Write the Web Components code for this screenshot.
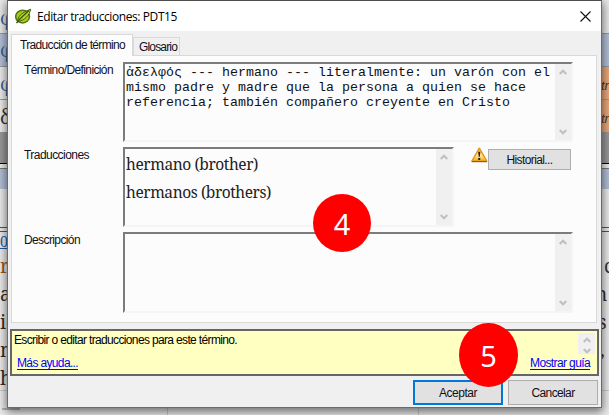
<!DOCTYPE html>
<html lang="es">
<head>
<meta charset="utf-8">
<title>Editar traducciones</title>
<style>
html,body{margin:0;width:609px;height:415px;overflow:hidden;background:#ececec}
body{font:12px "Liberation Sans",sans-serif;color:#101020}
</style>
</head>
<body>
<term-app></term-app>
<script>
const define = (name, html, setup) => {
  const t = document.createElement('template');
  t.innerHTML = html;
  customElements.define(name, class extends HTMLElement {
    constructor() { super(); this.attachShadow({mode:'open'}).append(t.content.cloneNode(true)); }
    connectedCallback() { if (setup) setup(this, this.shadowRoot); }
  });
};

/* A single line of text spread to a given width. */
define('fit-text', `<style>:host{display:block;white-space:pre}span{display:inline-block}</style><span><slot></slot></span>`,
  (el, root) => {
    const s = root.querySelector('span'), n = [...el.textContent].length;
    s.style.letterSpacing = ((+el.getAttribute('w') - s.getBoundingClientRect().width) / n) + 'px';
  });

define('scroll-strip', `<style>
:host{display:flex;flex-direction:column;justify-content:space-between;align-items:center;flex:none;width:16px;background:#f0f0f0;padding:5px 0;box-sizing:border-box}
svg{display:block;width:8px;height:6px;fill:none;stroke:#bfbfbf;stroke-width:2}
</style><svg viewBox="0 0 8 6"><path d="M.7 5 4 1.7 7.3 5"/></svg><svg viewBox="0 0 8 6"><path d="M.7 1 4 4.3 7.3 1"/></svg>`);

define('text-box', `<style>
:host{display:flex;box-sizing:border-box;height:80px;border:2px solid;border-color:#7c7c7c #f5f5f5 #f5f5f5 #7c7c7c;background:#fcfcfc}
div{flex:1;min-width:0;overflow:visible}
</style><div><slot></slot></div><scroll-strip></scroll-strip>`);

define('push-button', `<style>
:host{display:flex;box-sizing:border-box;width:90px;height:25px;background:#e1e1e1;border:1px solid #adadad;align-items:center;justify-content:center}
:host([primary]){border:2px solid #0078d7}
:host([small]){width:83px;height:21px}
</style><slot></slot>`);

define('step-badge', `<style>
:host{position:absolute;display:flex;align-items:center;justify-content:center;width:58px;height:58px;border-radius:50%;background:#f00;color:#fff;font:29px/1 "Noto Sans","Open Sans",sans-serif}
</style><slot></slot>`);

define('leaf-icon', `<style>:host{display:block;width:17px;height:17px}svg{display:block}</style>
<svg width="17" height="17" viewBox="0 0 17 17"><ellipse cx="7.6" cy="8.6" rx="6.9" ry="6.3" fill="#a9cc22" stroke="#53750f" stroke-width="1.5"/><path d="M2.5 14C3 8 6 5 15.7 1.2 14.4 7.500 10 12 2.500 14Z" fill="#b9d52b" stroke="#40600d" stroke-width="1"/><path d="M1.500 15C4.500 11 8 8 14 2.500" fill="none" stroke="#34500b" stroke-width="1.3"/></svg>`);

define('warning-icon', `<style>:host{display:block;width:17px;height:16px}svg{display:block}</style>
<svg width="17" height="16" viewBox="0 0 17 16"><defs><linearGradient id="g" x2="0" y2="1"><stop offset="0" stop-color="#f1b24a"/><stop offset=".55" stop-color="#ffe79a"/><stop offset="1" stop-color="#ffa30a"/></linearGradient></defs><path d="M8.300 1.200 15.800 14.200H.9Z" fill="url(#g)" stroke="#e49a22" stroke-width="1.500" stroke-linejoin="round"/><path d="M.8 14.700H16" stroke="#8a4c08" stroke-width="1"/><path d="M7.200 4.800h2.100l-.5 5h-1.100zM7.300 11h1.900v2H7.300z" fill="#1c1c1c"/></svg>`);

/* One band of the window behind the dialog. */
define('back-row', `<style>
:host{display:flex;justify-content:space-between;box-sizing:border-box;overflow:hidden;font:19px/28px "Noto Serif","Liberation Serif",serif;color:#332f2c}
div{width:8px;overflow:hidden;position:relative;display:flex;white-space:pre}
div:first-child{justify-content:flex-end}
</style><div><slot name="l"></slot></div><div><slot name="r"></slot></div>`);

define('backdrop-page', `<style>
:host{display:block;width:609px;height:415px;background:#ececec;overflow:hidden}
.t{background:#e9e9e9;border-bottom:1px solid #999;height:33px}
.b{background:#b3c0d8}
.g{color:#38618c}
.i{font:italic 13px/37px "Liberation Sans",sans-serif;color:#493626}
.u{color:#175ca9;text-decoration:underline}
.grid{display:grid;grid-template-columns:168px 251px 1fr;height:24px;border-top:1px solid #c9c9c9}
.grid div{border-right:1px solid #c9c9c9;padding:17px 0 0 2px}
.grid i{display:block;width:18px;height:2px;background:#b5b5b5}
.half{background:linear-gradient(90deg,#ececec 50%,#eaa879 50%)}
</style>
<back-row class="t" style="height:34px"><span slot="l" class="g" style="line-height:36px">φ</span></back-row>
<back-row class="t b"><span slot="l" class="g" style="line-height:32px">φ</span></back-row>
<back-row class="t half"><span slot="l" class="g" style="line-height:34px">φ</span><span slot="r" class="i">tra</span></back-row>
<back-row class="half" style="height:32px"><span slot="l" style="line-height:34px">δ</span><span slot="r" class="i">tra</span></back-row>
<back-row style="height:32px;background:#999;border-bottom:1px solid #000"></back-row>
<back-row style="height:5px;border-bottom:1px solid #777"></back-row>
<back-row class="b" style="height:20px"></back-row>
<back-row style="height:39px;border-bottom:1px solid #555"></back-row>
<back-row style="height:4px;border-bottom:1px solid #555"></back-row>
<back-row style="height:20px;"><span slot="l" class="u" style="font:16px/20px 'Liberation Serif',serif">0 </span></back-row>
<back-row style="height:28px"><span slot="l" style="color:#9b5725">r</span><span slot="r" style="margin-left:3px">c</span></back-row>
<back-row style="height:28px"><span slot="l">a </span><span slot="r" style="margin-left:-6px">n</span></back-row>
<back-row style="height:28px"><span slot="l">ie</span><span slot="r" style="margin-left:-3px">s</span></back-row>
<back-row style="height:28px"><span slot="l" style="margin-right:-8px">m</span><span slot="r" style="margin-left:-1px">, a</span></back-row>
<back-row style="height:26px"><span slot="l" style="margin-right:-3px">h</span></back-row>
<div class="grid"><div><back-row style="height:0"></back-row><i></i></div><div></div></div>`);

define('term-dialog', `<style>
:host{position:absolute;left:7px;top:0;width:595px;height:408px;box-sizing:border-box;border:1px solid #6b6b6b;border-top-color:#4d4d4d;background:#f0f0f0;box-shadow:0 3px 9px 1px #0008;display:flex;flex-direction:column}
header{height:30px;background:#fff;display:flex;align-items:center;box-sizing:border-box;padding:0 10px 0 7px;flex:none;font:12px "Open Sans","Noto Sans",sans-serif;color:#000}
header leaf-icon{margin-right:5px}
header svg{margin-left:auto}
nav{display:flex;align-items:flex-end;height:24px;padding-left:3px;flex:none}
nav div{box-sizing:border-box;border:1px solid #d9d9d9;border-bottom:0;height:18px;background:#f0f0f0;padding:1px 0 0 5px;width:47px;line-height:17px}
nav .on{width:122px;height:21px;background:#fcfcfc;border-right:1px solid #d9d9d9;padding:1px 0 0 8px;margin-bottom:-1px;position:relative;line-height:18px;height:22px}
main{box-sizing:border-box;margin:0 4px 0 3px;height:268px;border:1px solid #d9d9d9;background:#fcfcfc;display:grid;grid-template-columns:99px 450px;column-gap:0;grid-template-rows:80px 80px 81px;row-gap:5px;padding:6px 0 0 12px;flex:none;align-content:start}
main>fit-text{line-height:14px;padding-top:1px}
.mid{display:flex;align-items:flex-start}
.mid text-box{width:331px;flex:none}
warning-icon{margin:0 0 0 17px}
push-button[small]{margin:2px 0 0 0}
.mono{font:13.28px/15px "Liberation Mono",monospace;color:#111;padding:1px 0 0 1px}
.serif{font:15.5px/28px "Noto Serif","DejaVu Serif","Liberation Serif",serif;color:#222;padding:1px 0 0 1px}
aside{box-sizing:border-box;margin:6px 2px 0 2px;height:47px;border:2px solid #666;background:#ffffc1;padding:2px 2px 0;flex:none}
.line,.links,footer{display:flex;justify-content:space-between}
.line{height:21px;line-height:15px;color:#000}
.line scroll-strip{height:21px;width:17px;padding:4px 0 0;margin-top:0}
.links{padding:2px 5px 0 3px;color:#00f;text-decoration:underline;line-height:15px}
.links fit-text{text-decoration:none}
.links a{display:block;height:14px;box-sizing:border-box;border-bottom:1px solid #00f}
.links{text-decoration:none}
footer{justify-content:flex-end;gap:5px;padding:4px 3px 0 0;color:#101020}
</style>
<header><leaf-icon></leaf-icon><fit-text w="140">Editar traducciones: PDT15</fit-text><svg width="11" height="11" viewBox="0 0 11 11"><path d="M.5.5 10.500 10.500M10.500.5.5 10.500" stroke="#111" stroke-width="1.100"/></svg></header>
<nav><div class="on"><fit-text w="105">Traducción de término</fit-text></div><div><fit-text w="38">Glosario</fit-text></div></nav>
<main>
<fit-text w="89">Término/Definición</fit-text>
<text-box><div class="mono"><fit-text w="424">ἀδελφός --- hermano --- literalmente: un varón con el</fit-text><fit-text w="400">mismo padre y madre que la persona a quien se hace</fit-text><fit-text w="384">referencia; también compañero creyente en Cristo</fit-text></div></text-box>
<fit-text w="65">Traducciones</fit-text>
<div class="mid"><text-box><div class="serif"><fit-text w="132">hermano (brother)</fit-text><fit-text w="145">hermanos (brothers)</fit-text></div></text-box><warning-icon></warning-icon><push-button small><fit-text w="46">Historial...</fit-text></push-button></div>
<fit-text w="56">Descripción</fit-text>
<text-box style="height:81px"></text-box>
</main>
<aside><div class="line"><fit-text w="223">Escribir o editar traducciones para este término.</fit-text><scroll-strip></scroll-strip></div>
<div class="links"><a><fit-text w="61">Más ayuda...</fit-text></a><a><fit-text w="60">Mostrar guía</fit-text></a></div></aside>
<footer><push-button primary><fit-text w="38">Aceptar</fit-text></push-button><push-button><fit-text w="43">Cancelar</fit-text></push-button></footer>`);

define('term-app', `<style>:host{display:block;position:relative;width:609px;height:415px;overflow:hidden}
.four{left:313px;top:194px}.five{left:459px;top:323px;width:59px;height:64px}</style>
<backdrop-page></backdrop-page><term-dialog></term-dialog>
<step-badge class="four">4</step-badge><step-badge class="five">5</step-badge>`);
</script>
</body>
</html>
